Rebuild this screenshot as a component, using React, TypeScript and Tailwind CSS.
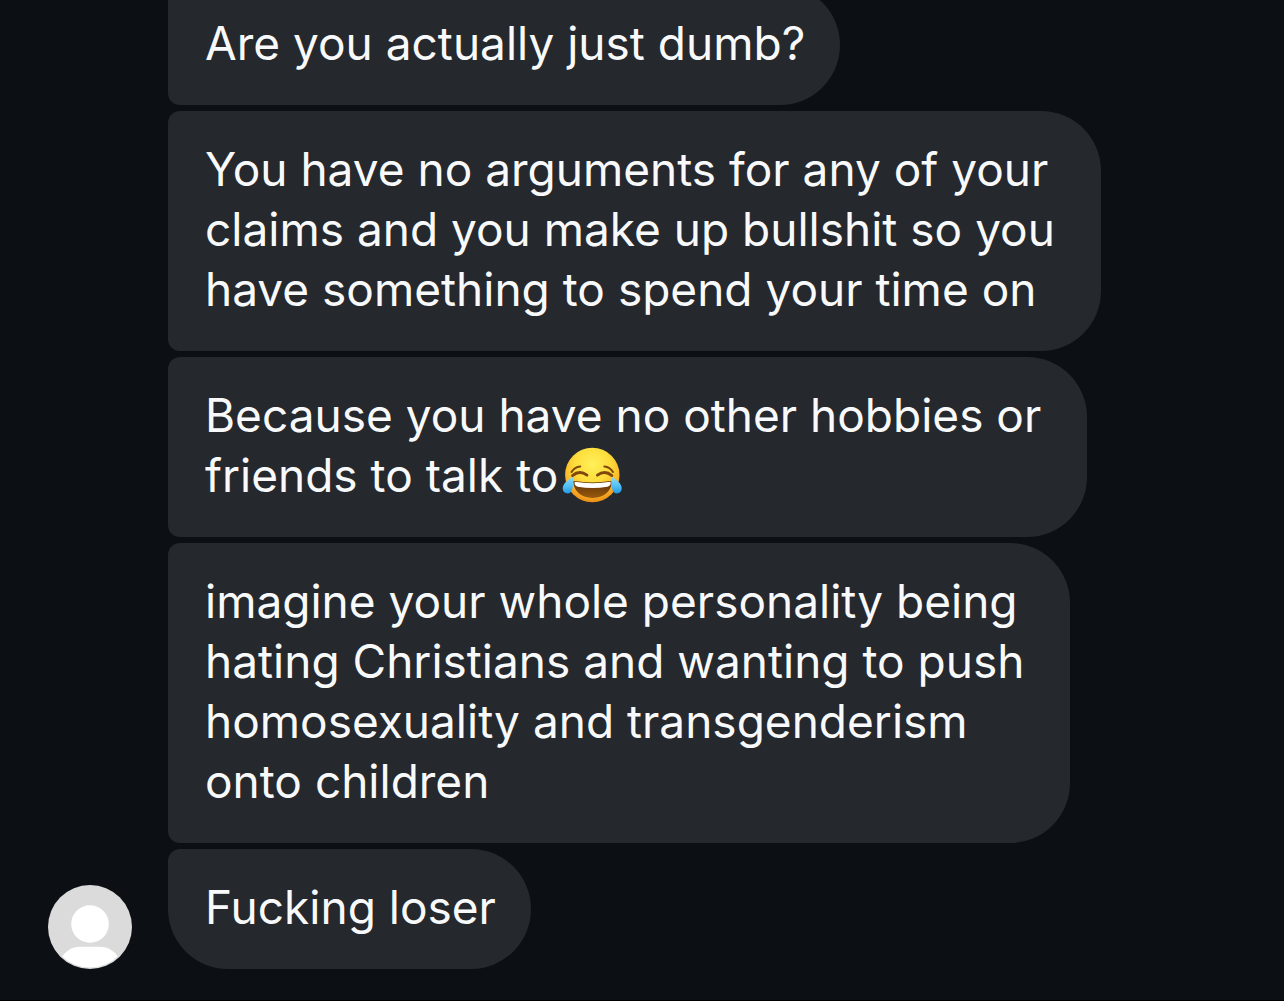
type Message = { id: number; lines: string[]; emoji?: boolean; last?: boolean };

const MESSAGES: Message[] = [
  { id: 1, lines: ["Are you actually just dumb?"] },
  {
    id: 2,
    lines: [
      "You have no arguments for any of your",
      "claims and you make up bullshit so you",
      "have something to spend your time on",
    ],
  },
  { id: 3, lines: ["Because you have no other hobbies or", "friends to talk to"], emoji: true },
  {
    id: 4,
    lines: [
      "imagine your whole personality being",
      "hating Christians and wanting to push",
      "homosexuality and transgenderism",
      "onto children",
    ],
  },
  { id: 5, lines: ["Fucking loser"], last: true },
];

export default function App() {
  return (
    <main className="flex min-h-svh items-end overflow-hidden border-b border-black bg-[#0c0f14] px-12 pb-[31px] font-['Inter',sans-serif] text-[#f8f9fa]">
      <Avatar />
      {/* the oldest bubble is partly scrolled off the top */}
      <ul className="-mt-[15px] ml-9 flex min-w-0 flex-col items-start gap-1.5">
        {MESSAGES.map((m) => (
          <Bubble key={m.id} message={m} />
        ))}
      </ul>
    </main>
  );
}

function Bubble({ message }: { message: Message }) {
  const { lines, emoji, last } = message;
  const corners = last ? "rounded-[60px] rounded-tl-xl" : "rounded-l-xl rounded-r-[60px]";
  const padding = lines.length > 1 ? "pr-[46px]" : "pr-[35px]";
  return (
    <li className={`bg-[#25282d] pt-7 pb-8 pl-[37px] text-[46px] leading-[60px] ${padding} ${corners}`}>
      {lines.map((line, i) => (
        <span key={line} className="flex items-center gap-1 whitespace-nowrap">
          {line}
          {emoji && i === lines.length - 1 && <JoyEmoji />}
        </span>
      ))}
    </li>
  );
}

function Avatar() {
  return (
    <svg viewBox="0 0 84 84" className="size-21 shrink-0" role="img" aria-label="Profile picture">
      <defs>
        <clipPath id="avatar-clip">
          <circle cx="42" cy="42" r="40.5" />
        </clipPath>
      </defs>
      <circle cx="42" cy="42" r="42" fill="#dbdbdb" />
      <circle cx="42" cy="39" r="18.8" fill="#fff" />
      <path
        d="M12 75C17 66 24 61.8 32 61.8h20c8 0 15 4.2 20 13.2v9H12z"
        fill="#fff"
        clipPath="url(#avatar-clip)"
      />
    </svg>
  );
}

function JoyEmoji() {
  return (
    <svg viewBox="0 -2 60 60" className="size-15 shrink-0" role="img" aria-label="Face with tears of joy">
      <defs>
        <radialGradient id="joy-face" cx="0.5" cy="0.3" r="0.72">
          <stop offset="0" stopColor="#fff05a" />
          <stop offset="0.45" stopColor="#fddd3b" />
          <stop offset="0.75" stopColor="#fbb62a" />
          <stop offset="1" stopColor="#ea8a16" />
        </radialGradient>
        <linearGradient id="joy-mouth" x1="0" y1="0" x2="0" y2="1">
          <stop offset="0" stopColor="#5e2f08" />
          <stop offset="1" stopColor="#975b0c" />
        </linearGradient>
        <linearGradient id="joy-tear" x1="0" y1="0" x2="0" y2="1">
          <stop offset="0" stopColor="#8ddcf8" />
          <stop offset="0.6" stopColor="#4fbdf2" />
          <stop offset="1" stopColor="#2398e2" />
        </linearGradient>
      </defs>
      <circle cx="30.3" cy="28" r="27.2" fill="url(#joy-face)" />
      <g fill="none" stroke="#80470f" strokeLinecap="round">
        <path d="M9.5 25q3-5 8.8-5.6M42.3 19.4q5.7.6 8.7 5.6" strokeWidth="2" />
        <path d="M10.5 28.6q7-6 14.5-.4M35.4 28.2q7.5-5.6 14.5.4" strokeWidth="2.8" />
      </g>
      <path
        d="M12.3 34q18 2.8 36.6 0c.8 0 1.1.6 1 1.6-1.2 9.500-8.500 15.300-19.300 15.300S12.500 45.100 11.300 35.600c-.1-1 .2-1.600 1-1.600z"
        fill="url(#joy-mouth)"
      />
      <path
        d="M12.700 34.800q17.900 2.700 35.800 0c.8 2.500-.6 4.500-3.100 5q-14.800 2.400-29.600 0c-2.500-.5-3.900-2.500-3.100-5z"
        fill="#fff"
      />
      <path d="M11.3 29.700C7 32 .7 36.300.7 41.300c0 3.100 2 5.200 4.900 5.200 5.200 0 6-8.500 5.700-16.800z" fill="url(#joy-tear)" />
      <path d="M49.300 29.700C53.600 32 59.700 36.300 59.700 41.300c0 3.100-2 5.200-4.900 5.200-5.200 0-5.800-8.500-5.500-16.800z" fill="url(#joy-tear)" />
    </svg>
  );
}
